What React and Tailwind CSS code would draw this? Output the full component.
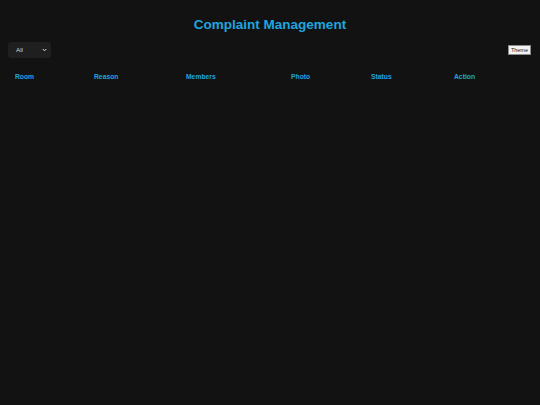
import React from "react";

export default function App() {
  const cols = [
    { label: "Room", w: "w-[79px]" },
    { label: "Reason", w: "w-[92px]" },
    { label: "Members", w: "w-[105px]" },
    { label: "Photo", w: "w-[80px]" },
    { label: "Status", w: "w-[83px]" },
    { label: "Action", w: "flex-1" },
  ];
  return (
    <div
      className="min-h-screen w-full bg-[#121212] px-[8px]"
      style={{ fontFamily: '"Liberation Sans", Arial, sans-serif' }}
    >
      <h1 className="pt-[17px] text-center text-[13.5px] font-bold leading-[16px] text-[#1ea5df]">
        Complaint Management
      </h1>
      <div className="mt-[9px] flex items-center justify-between">
        <div className="flex h-[16px] w-[43px] items-center justify-between rounded-[3px] bg-[#1f1f1f] pl-[8px] pr-[4px]">
          <span className="text-[6.25px] leading-none text-[#d0d0d0]">All</span>
          <svg width="5" height="4" viewBox="0 0 10 8" fill="none">
            <path d="M1.5 2 L5 5.5 L8.5 2" stroke="#e0e0e0" strokeWidth="2" />
          </svg>
        </div>
        <button className="mr-[1px] border border-[#8a8a8a] bg-[#f2f2f2] px-[2px] py-[1px] text-[5.5px] leading-[6px] text-[#222]">
          Theme
        </button>
      </div>
      <div className="mt-[15px] flex pl-[7px]">
        {cols.map((c) => (
          <div
            key={c.label}
            className={`${c.w} text-[6.75px] font-bold leading-[8px] text-[#1ea5df]`}
          >
            {c.label}
          </div>
        ))}
      </div>
    </div>
  );
}
